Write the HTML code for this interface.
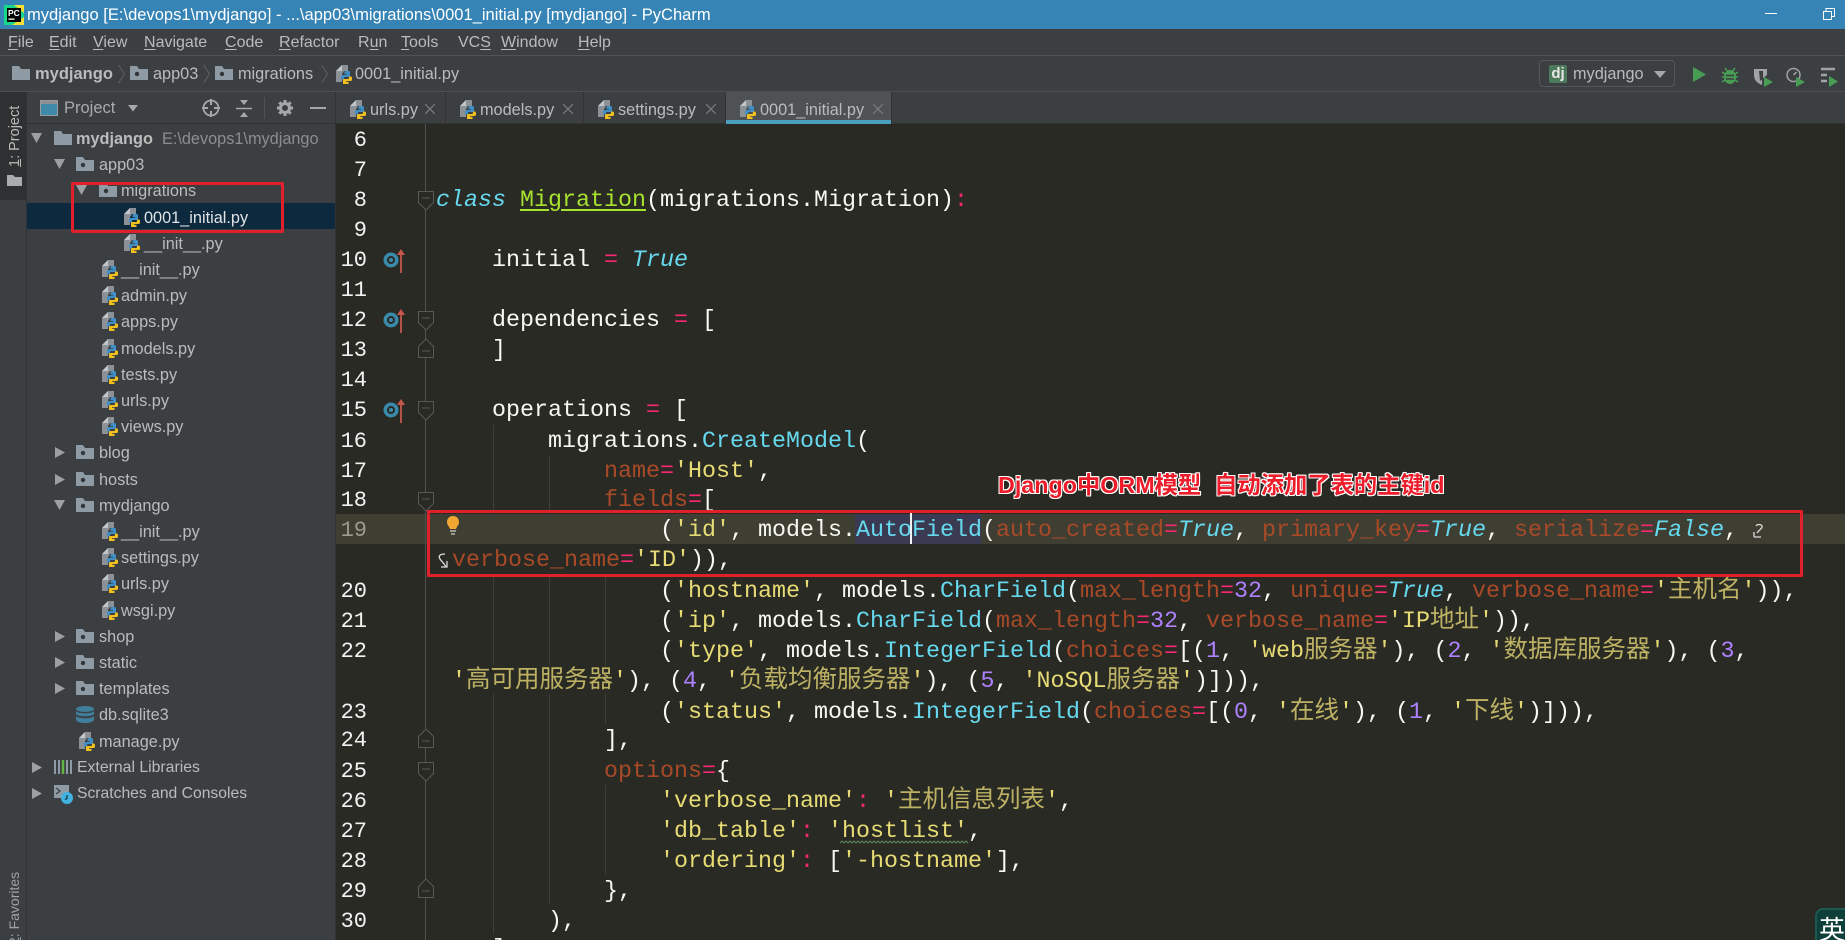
<!DOCTYPE html>
<html><head><meta charset="utf-8"><title>PyCharm</title>
<style>
html,body{margin:0;padding:0;background:#3c3f41;width:1845px;height:940px;overflow:hidden;}
#r{position:relative;width:1845px;height:940px;overflow:hidden;font-family:"Liberation Sans","Noto Sans CJK SC",sans-serif;color:#bbb;font-size:16px;}
.a{position:absolute;}
.t{position:absolute;white-space:pre;height:26px;line-height:26px;font-size:16.3px;color:#bbb;margin-top:1px;}
svg.i{position:absolute;overflow:visible;}
.m{position:absolute;top:30px;height:26px;line-height:26px;font-size:16px;color:#bbb;white-space:pre;}
.m u{text-underline-offset:2px;}
.l{position:absolute;left:436px;height:30px;white-space:pre;font:23.33px/30px "Liberation Mono","Noto Sans CJK SC",monospace;color:#f8f8f2;}
.c{font-size:24.5px;line-height:0;font-family:"Noto Sans CJK SC",sans-serif;}
.b{color:#66d9ef}.p{color:#f92672}.o{color:#a84a28}.s{color:#e6db74}.n{color:#ae81ff}.g{color:#a6e22e}.it{font-style:italic}
.s .c{color:#bdb264}
.ln{position:absolute;left:336px;width:31px;text-align:right;height:30px;font:22px/30px "Liberation Mono",monospace;color:#f2f2f2;}
.guide{position:absolute;width:1px;background:#3f3f3a;}
</style></head><body><div id="r">
<svg width="0" height="0" style="position:absolute">
<defs>
<symbol id="py" viewBox="0 0 18 20"><path d="M7 1h6v6H9l-2 3v8H1V7z" fill="#8b9196"/><path d="M7 1v6H1z" fill="#c2c6c9"/><path d="M11 7h2.500A1.500 1.500 0 0 1 15 8.500V12a1 1 0 0 1-1 1H10a1 1 0 0 0-1 1v1.500H7.500A1.500 1.500 0 0 1 6 14v-1.500A1.500 1.500 0 0 1 7.500 11H12v-.8H9.500V8.500A1.500 1.500 0 0 1 11 7z" fill="#3f8fc6"/><path d="M11 7h2.500A1.500 1.500 0 0 1 15 8.500V12a1 1 0 0 1-1 1H10a1 1 0 0 0-1 1v1.500H7.500A1.500 1.500 0 0 1 6 14v-1.500A1.500 1.500 0 0 1 7.500 11H12v-.8H9.500V8.500A1.500 1.500 0 0 1 11 7z" fill="#f2c01e" transform="rotate(180 11.500 14)"/></symbol>
<symbol id="fo" viewBox="0 0 18 14"><path d="M0 0h7l2 3h9v11H0z" fill="#8f9ba4"/></symbol>
<symbol id="pk" viewBox="0 0 18 14"><path d="M0 0h7l2 3h9v11H0z" fill="#8f9ba4"/><circle cx="7" cy="8" r="2.200" fill="#33363a"/></symbol>
<symbol id="ov" viewBox="0 0 23 26"><circle cx="8" cy="13" r="7.500" fill="#3a8bab"/><circle cx="8" cy="13" r="3" fill="none" stroke="#2a2a24" stroke-width="2"/><path d="M18 26V6" stroke="#b5534b" stroke-width="2"/><path d="M14 8l4-6 4 6z" fill="#c7564d"/></symbol>
<symbol id="fd" viewBox="0 0 16 20"><path d="M.5.5h15v11L8 19 .5 11.500z" fill="#2a2a24" stroke="#585854"/><path d="M4 7h8" stroke="#585854"/></symbol>
<symbol id="fu" viewBox="0 0 16 20"><path d="M.5 19.500h15v-11L8 1 .5 8.500z" fill="#2a2a24" stroke="#585854"/><path d="M4 13h8" stroke="#585854"/></symbol>
<symbol id="x" viewBox="0 0 10 10"><path d="M0 0l10 10M10 0L0 10" stroke="#787a7c" stroke-width="1.300"/></symbol>
<symbol id="chev" viewBox="0 0 7 20"><path d="M.5 1l6 9-6 9" fill="none" stroke="#5d6062" stroke-width="1"/></symbol>
</defs></svg>

<!-- title bar -->
<div class="a" style="left:0;top:0;width:1845px;height:29px;background:#3684b5"></div>
<svg class="i" style="left:4px;top:5px" width="20" height="20"><rect width="20" height="20" fill="#18d68a"/><path d="M0 0h20v8L10 0zM20 20H8l12-8z" fill="#f4e034"/><rect x="3" y="3" width="14" height="14" fill="#000"/><text x="4" y="11" font-family="Liberation Sans" font-size="8.500" font-weight="bold" fill="#fff">PC</text><rect x="4.500" y="13.500" width="6" height="1.300" fill="#fff"/></svg>
<div class="a" style="left:27px;top:0;height:29px;line-height:29px;color:#fff;font-size:16.55px;white-space:pre">mydjango [E:\devops1\mydjango] - ...\app03\migrations\0001_initial.py [mydjango] - PyCharm</div>
<div class="a" style="left:1765px;top:13px;width:12px;height:1px;background:#fff"></div>
<svg class="i" style="left:1823px;top:8px" width="12" height="12"><path d="M.5 3.500h8v8h-8zM3 3.500V.5h8.500v8H8.500" fill="none" stroke="#fff"/></svg>

<!-- menu -->
<div class="m" style="left:8px"><u>F</u>ile</div>
<div class="m" style="left:49px"><u>E</u>dit</div>
<div class="m" style="left:93px"><u>V</u>iew</div>
<div class="m" style="left:144px"><u>N</u>avigate</div>
<div class="m" style="left:225px"><u>C</u>ode</div>
<div class="m" style="left:279px"><u>R</u>efactor</div>
<div class="m" style="left:358px">R<u>u</u>n</div>
<div class="m" style="left:401px"><u>T</u>ools</div>
<div class="m" style="left:458px">VC<u>S</u></div>
<div class="m" style="left:501px"><u>W</u>indow</div>
<div class="m" style="left:578px"><u>H</u>elp</div>
<div class="a" style="left:0;top:55px;width:1845px;height:1px;background:#515355"></div>
<div class="a" style="left:0;top:91px;width:1845px;height:1px;background:#4e5052"></div>

<!-- breadcrumb -->
<svg class="i" style="left:12px;top:66px" width="18" height="14"><use href="#fo"/></svg>
<div class="t" style="left:35px;top:60px;font-weight:bold;font-size:16.500px">mydjango</div>
<svg class="i" style="left:118px;top:64px" width="7" height="20"><use href="#chev"/></svg>
<svg class="i" style="left:130px;top:66px" width="18" height="14"><use href="#pk"/></svg>
<div class="t" style="left:153px;top:60px">app03</div>
<svg class="i" style="left:203px;top:64px" width="7" height="20"><use href="#chev"/></svg>
<svg class="i" style="left:215px;top:66px" width="18" height="14"><use href="#pk"/></svg>
<div class="t" style="left:238px;top:60px">migrations</div>
<svg class="i" style="left:321px;top:64px" width="7" height="20"><use href="#chev"/></svg>
<svg class="i" style="left:335px;top:64px" width="18" height="20"><use href="#py"/></svg>
<div class="t" style="left:355px;top:60px">0001_initial.py</div>

<!-- run config -->
<div class="a" style="left:1539px;top:60px;width:134px;height:25px;border:1px solid #55585a;border-radius:4px"></div>
<div class="a" style="left:1549px;top:65px;width:18px;height:18px;background:#4d7a5c;border-radius:2px;color:#e8e8e8;font:bold 15px/17px 'Liberation Sans',sans-serif;text-align:center">dj</div>
<div class="t" style="left:1573px;top:60px">mydjango</div>
<svg class="i" style="left:1654px;top:71px" width="12" height="8"><path d="M0 0h12L6 7z" fill="#a5a8aa"/></svg>
<svg class="i" style="left:1693px;top:67px" width="13" height="15"><path d="M0 0l13 7.500L0 15z" fill="#499c54"/></svg>
<svg class="i" style="left:1722px;top:67px" width="16" height="17"><ellipse cx="8" cy="10" rx="6" ry="7" fill="#499c54"/><path d="M3 1l3 4M13 1l-3 4M0 10h16M0 5l3 2M16 5l-3 2M0 15l3-2M16 15l-3-2" stroke="#499c54" stroke-width="1.500"/><path d="M4 8.500h8M4 12h8" stroke="#3c3f41" stroke-width="1.500"/></svg>
<svg class="i" style="left:1754px;top:68px" width="19" height="19"><path d="M0 1h13v6l-5 4v6C3 15 0 12 0 7z" fill="#9fa3a6"/><path d="M5 3h4v8l-3 2z" fill="#3c3f41"/><path d="M10 9l9 5-9 5z" fill="#499c54"/></svg>
<svg class="i" style="left:1786px;top:67px" width="19" height="20"><circle cx="7.500" cy="8" r="6.500" fill="none" stroke="#9fa3a6" stroke-width="1.500"/><path d="M7.500 8l3-3" stroke="#9fa3a6" stroke-width="1.500"/><path d="M10 10l9 5-9 5z" fill="#499c54"/></svg>
<svg class="i" style="left:1820px;top:68px" width="18" height="19"><path d="M1 1h14M1 7h6M1 13h6" stroke="#9fa3a6" stroke-width="2.500"/><path d="M9 8l9 5.500-9 5.500z" fill="#499c54"/></svg>

<!-- left strip -->
<div class="a" style="left:0;top:92px;width:27px;height:848px;background:#3c3f41;border-right:1px solid #323232;box-sizing:border-box"></div>
<div class="a" style="left:0;top:92px;width:26px;height:108px;background:#2f3031"></div>
<div class="a" style="left:-15px;top:127px;width:60px;height:20px;line-height:20px;font-size:14.500px;color:#bbb;transform:rotate(-90deg);transform-origin:center;text-align:center;white-space:pre"><u>1</u>: Project</div>
<svg class="i" style="left:7px;top:175px" width="15" height="11"><path d="M0 0h6l2 2h7v9H0z" fill="#a9adb0"/></svg>
<div class="a" style="left:-26px;top:895px;width:80px;height:20px;line-height:20px;font-size:14px;color:#a0a3a5;transform:rotate(-90deg);white-space:pre;text-align:left"><u>2</u>: Favorites</div>

<!-- project panel -->
<div class="a" style="left:27px;top:123px;width:309px;height:1px;background:#323232"></div>
<div class="a" style="left:335px;top:92px;width:1px;height:848px;background:#323232"></div>
<svg class="i" style="left:40px;top:100px" width="18" height="16"><rect x=".5" y=".5" width="17" height="15" fill="#3f8aa8" stroke="#9a9da0"/><rect x="1" y="1" width="16" height="3" fill="#8d9092"/></svg>
<div class="t" style="left:64px;top:94px;font-size:16.500px;color:#aaa">Project</div>
<svg class="i" style="left:128px;top:105px" width="10" height="7"><path d="M0 0h10L5 6.500z" fill="#a5a8aa"/></svg>
<svg class="i" style="left:202px;top:99px" width="18" height="18"><circle cx="9" cy="9" r="7.500" fill="none" stroke="#a5a8aa" stroke-width="1.800"/><path d="M9 0v6M9 12v6M0 9h6M12 9h6" stroke="#a5a8aa" stroke-width="2"/></svg>
<svg class="i" style="left:236px;top:100px" width="16" height="17"><path d="M0 8.500h16" stroke="#a5a8aa" stroke-width="1.500"/><path d="M4 0h8L8 5zM4 17h8l-4-5z" fill="#a5a8aa"/></svg>
<div class="a" style="left:264px;top:97px;width:1px;height:22px;background:#505355"></div>
<svg class="i" style="left:277px;top:100px" width="16" height="16"><circle cx="8" cy="8" r="4.500" fill="none" stroke="#a5a8aa" stroke-width="3"/><path d="M8 0v3M8 13v3M0 8h3M13 8h3M2.300 2.300l2 2M11.700 11.700l2 2M2.300 13.700l2-2M11.700 4.300l2-2" stroke="#a5a8aa" stroke-width="3"/></svg>
<div class="a" style="left:310px;top:107px;width:16px;height:2px;background:#a5a8aa"></div>

<div class="a" style="left:27px;top:203px;width:308px;height:26px;background:#0d293e"></div>

<!-- tree arrows -->
<svg class="i" style="left:31px;top:133px" width="12" height="10"><path d="M0 0h11L5.500 10z" fill="#9da0a2"/></svg>
<svg class="i" style="left:54px;top:159px" width="12" height="10"><path d="M0 0h11L5.500 10z" fill="#9da0a2"/></svg>
<svg class="i" style="left:76px;top:185px" width="12" height="10"><path d="M0 0h11L5.500 10z" fill="#9da0a2"/></svg>
<svg class="i" style="left:55px;top:447px" width="11" height="11"><path d="M0 0l10 5.500L0 11z" fill="#9da0a2"/></svg>
<svg class="i" style="left:55px;top:474px" width="11" height="11"><path d="M0 0l10 5.500L0 11z" fill="#9da0a2"/></svg>
<svg class="i" style="left:54px;top:500px" width="12" height="10"><path d="M0 0h11L5.500 10z" fill="#9da0a2"/></svg>
<svg class="i" style="left:55px;top:631px" width="11" height="11"><path d="M0 0l10 5.500L0 11z" fill="#9da0a2"/></svg>
<svg class="i" style="left:55px;top:657px" width="11" height="11"><path d="M0 0l10 5.500L0 11z" fill="#9da0a2"/></svg>
<svg class="i" style="left:55px;top:683px" width="11" height="11"><path d="M0 0l10 5.500L0 11z" fill="#9da0a2"/></svg>
<svg class="i" style="left:32px;top:762px" width="11" height="11"><path d="M0 0l10 5.500L0 11z" fill="#9da0a2"/></svg>
<svg class="i" style="left:32px;top:788px" width="11" height="11"><path d="M0 0l10 5.500L0 11z" fill="#9da0a2"/></svg>

<!-- tree rows -->
<svg class="i" style="left:54px;top:131px" width="18" height="14"><use href="#fo"/></svg>
<div class="t" style="left:76px;top:125px"><b>mydjango</b><span style="color:#8b8e90">  E:\devops1\mydjango</span></div>
<svg class="i" style="left:76px;top:157px" width="18" height="14"><use href="#pk"/></svg><div class="t" style="left:99px;top:151px">app03</div>
<svg class="i" style="left:99px;top:183px" width="18" height="14"><use href="#pk"/></svg><div class="t" style="left:121px;top:177px">migrations</div>
<svg class="i" style="left:123px;top:207px" width="18" height="20"><use href="#py"/></svg><div class="t" style="left:144px;top:204px;color:#dfe3e6">0001_initial.py</div>
<svg class="i" style="left:123px;top:233px" width="18" height="20"><use href="#py"/></svg><div class="t" style="left:144px;top:230px">__init__.py</div>
<svg class="i" style="left:101px;top:259px" width="18" height="20"><use href="#py"/></svg><div class="t" style="left:121px;top:256px">__init__.py</div>
<svg class="i" style="left:101px;top:285px" width="18" height="20"><use href="#py"/></svg><div class="t" style="left:121px;top:282px">admin.py</div>
<svg class="i" style="left:101px;top:311px" width="18" height="20"><use href="#py"/></svg><div class="t" style="left:121px;top:308px">apps.py</div>
<svg class="i" style="left:101px;top:338px" width="18" height="20"><use href="#py"/></svg><div class="t" style="left:121px;top:335px">models.py</div>
<svg class="i" style="left:101px;top:364px" width="18" height="20"><use href="#py"/></svg><div class="t" style="left:121px;top:361px">tests.py</div>
<svg class="i" style="left:101px;top:390px" width="18" height="20"><use href="#py"/></svg><div class="t" style="left:121px;top:387px">urls.py</div>
<svg class="i" style="left:101px;top:416px" width="18" height="20"><use href="#py"/></svg><div class="t" style="left:121px;top:413px">views.py</div>
<svg class="i" style="left:76px;top:445px" width="18" height="14"><use href="#pk"/></svg><div class="t" style="left:99px;top:439px">blog</div>
<svg class="i" style="left:76px;top:472px" width="18" height="14"><use href="#pk"/></svg><div class="t" style="left:99px;top:466px">hosts</div>
<svg class="i" style="left:76px;top:498px" width="18" height="14"><use href="#pk"/></svg><div class="t" style="left:99px;top:492px">mydjango</div>
<svg class="i" style="left:101px;top:521px" width="18" height="20"><use href="#py"/></svg><div class="t" style="left:121px;top:518px">__init__.py</div>
<svg class="i" style="left:101px;top:547px" width="18" height="20"><use href="#py"/></svg><div class="t" style="left:121px;top:544px">settings.py</div>
<svg class="i" style="left:101px;top:573px" width="18" height="20"><use href="#py"/></svg><div class="t" style="left:121px;top:570px">urls.py</div>
<svg class="i" style="left:101px;top:600px" width="18" height="20"><use href="#py"/></svg><div class="t" style="left:121px;top:597px">wsgi.py</div>
<svg class="i" style="left:76px;top:629px" width="18" height="14"><use href="#pk"/></svg><div class="t" style="left:99px;top:623px">shop</div>
<svg class="i" style="left:76px;top:655px" width="18" height="14"><use href="#pk"/></svg><div class="t" style="left:99px;top:649px">static</div>
<svg class="i" style="left:76px;top:681px" width="18" height="14"><use href="#pk"/></svg><div class="t" style="left:99px;top:675px">templates</div>
<svg class="i" style="left:76px;top:706px" width="18" height="18"><ellipse cx="9" cy="3" rx="9" ry="3" fill="#3f7f9c"/><path d="M0 5c2 3 16 3 18 0v3c-2 3-16 3-18 0zM0 10c2 3 16 3 18 0v4c-2 4-16 4-18 0z" fill="#3f7f9c"/></svg><div class="t" style="left:99px;top:701px">db.sqlite3</div>
<svg class="i" style="left:78px;top:731px" width="18" height="20"><use href="#py"/></svg><div class="t" style="left:99px;top:728px">manage.py</div>
<svg class="i" style="left:54px;top:759px" width="18" height="16"><path d="M1 1v14M5 1v14M13 1v14M17 1v14" stroke="#8f9ba4" stroke-width="2"/><path d="M9 1v14" stroke="#62b543" stroke-width="2.500"/></svg><div class="t" style="left:77px;top:754px;font-size:15.800px">External Libraries</div>
<svg class="i" style="left:54px;top:785px" width="20" height="19"><rect width="15" height="13" fill="#8f9ba4"/><path d="M2 3l4 3-4 3" fill="none" stroke="#3c3f41" stroke-width="1.300"/><circle cx="13" cy="13" r="6" fill="#3fb2e0"/><path d="M13 10v3.500l-2 1" fill="none" stroke="#1a3a4a" stroke-width="1.300"/></svg><div class="t" style="left:77px;top:780px;font-size:15.700px">Scratches and Consoles</div>

<!-- tabs -->
<div class="a" style="left:726px;top:92px;width:165px;height:28px;background:#4e5254"></div>
<div class="a" style="left:726px;top:120px;width:165px;height:4px;background:#4a9fbd"></div>
<div class="a" style="left:445px;top:92px;width:1px;height:31px;background:#323232"></div>
<div class="a" style="left:583px;top:92px;width:1px;height:31px;background:#323232"></div>
<div class="a" style="left:725px;top:92px;width:1px;height:31px;background:#323232"></div>
<div class="a" style="left:891px;top:92px;width:1px;height:31px;background:#323232"></div>
<svg class="i" style="left:349px;top:99px" width="18" height="20"><use href="#py"/></svg><div class="t" style="left:370px;top:96px">urls.py</div><svg class="i" style="left:425px;top:104px" width="10" height="10"><use href="#x"/></svg>
<svg class="i" style="left:459px;top:99px" width="18" height="20"><use href="#py"/></svg><div class="t" style="left:480px;top:96px">models.py</div><svg class="i" style="left:563px;top:104px" width="10" height="10"><use href="#x"/></svg>
<svg class="i" style="left:597px;top:99px" width="18" height="20"><use href="#py"/></svg><div class="t" style="left:618px;top:96px">settings.py</div><svg class="i" style="left:706px;top:104px" width="10" height="10"><use href="#x"/></svg>
<svg class="i" style="left:739px;top:99px" width="18" height="20"><use href="#py"/></svg><div class="t" style="left:760px;top:96px">0001_initial.py</div><svg class="i" style="left:873px;top:104px" width="10" height="10"><use href="#x"/></svg>

<!-- editor -->
<div class="a" style="left:336px;top:124px;width:1509px;height:816px;background:#2a2a24"></div>
<div class="a" style="left:336px;top:123px;width:390px;height:1px;background:#323232"></div>
<div class="a" style="left:891px;top:123px;width:954px;height:1px;background:#323232"></div>
<div class="a" style="left:336px;top:514px;width:1509px;height:30px;background:#3f3e33"></div>
<div class="a" style="left:855px;top:514px;width:126px;height:30px;background:#3a3b52"></div>
<div class="a" style="left:425px;top:124px;width:1px;height:816px;background:#50504c"></div>

<div class="guide" style="left:493px;top:425px;height:120px"></div><div class="guide" style="left:493px;top:575px;height:90px"></div><div class="guide" style="left:493px;top:694px;height:240px"></div>
<div class="guide" style="left:549px;top:455px;height:90px"></div><div class="guide" style="left:549px;top:575px;height:90px"></div><div class="guide" style="left:549px;top:694px;height:210px"></div>
<div class="guide" style="left:605px;top:514px;height:31px"></div><div class="guide" style="left:605px;top:575px;height:90px"></div><div class="guide" style="left:605px;top:694px;height:30px"></div><div class="guide" style="left:605px;top:785px;height:89px"></div>

<!-- line numbers -->
<div class="ln" style="top:126px">6</div><div class="ln" style="top:156px">7</div><div class="ln" style="top:186px">8</div><div class="ln" style="top:216px">9</div>
<div class="ln" style="top:246px">10</div><div class="ln" style="top:276px">11</div><div class="ln" style="top:306px">12</div><div class="ln" style="top:336px">13</div>
<div class="ln" style="top:366px">14</div><div class="ln" style="top:396px">15</div><div class="ln" style="top:427px">16</div><div class="ln" style="top:457px">17</div>
<div class="ln" style="top:486px">18</div><div class="ln" style="top:516px;color:#9a9a90">19</div><div class="ln" style="top:577px">20</div><div class="ln" style="top:607px">21</div>
<div class="ln" style="top:637px">22</div><div class="ln" style="top:698px">23</div><div class="ln" style="top:726px">24</div><div class="ln" style="top:757px">25</div>
<div class="ln" style="top:787px">26</div><div class="ln" style="top:817px">27</div><div class="ln" style="top:847px">28</div><div class="ln" style="top:877px">29</div><div class="ln" style="top:907px">30</div>

<!-- gutter icons -->
<svg class="i" style="left:383px;top:247px" width="23" height="26"><use href="#ov"/></svg>
<svg class="i" style="left:383px;top:307px" width="23" height="26"><use href="#ov"/></svg>
<svg class="i" style="left:383px;top:397px" width="23" height="26"><use href="#ov"/></svg>
<svg class="i" style="left:418px;top:191px" width="16" height="20"><use href="#fd"/></svg>
<svg class="i" style="left:418px;top:311px" width="16" height="20"><use href="#fd"/></svg>
<svg class="i" style="left:418px;top:338px" width="16" height="20"><use href="#fu"/></svg>
<svg class="i" style="left:418px;top:401px" width="16" height="20"><use href="#fd"/></svg>
<svg class="i" style="left:418px;top:492px" width="16" height="20"><use href="#fd"/></svg>
<svg class="i" style="left:418px;top:728px" width="16" height="20"><use href="#fu"/></svg>
<svg class="i" style="left:418px;top:762px" width="16" height="20"><use href="#fd"/></svg>
<svg class="i" style="left:418px;top:878px" width="16" height="20"><use href="#fu"/></svg>
<svg class="i" style="left:445px;top:516px" width="16" height="20"><path d="M8 0c4 0 6 3 6 6 0 3-2 4-3 7H5C4 10 2 9 2 6c0-3 2-6 6-6z" fill="#f0a732"/><path d="M5 15h6M6 18h4" stroke="#a8a8a0" stroke-width="1.700"/></svg>

<!-- code -->
<div class="l" style="top:186px"><span class="b it">class</span> <span class="g" style="text-decoration:underline;text-underline-offset:3px">Migration</span>(migrations.Migration)<span class="p">:</span></div>
<div class="l" style="top:246px">    initial <span class="p">=</span> <span class="b it">True</span></div>
<div class="l" style="top:306px">    dependencies <span class="p">=</span> [</div>
<div class="l" style="top:336px">    ]</div>
<div class="l" style="top:396px">    operations <span class="p">=</span> [</div>
<div class="l" style="top:427px">        migrations.<span class="b">CreateModel</span>(</div>
<div class="l" style="top:457px">            <span class="o">name</span><span class="p">=</span><span class="s">'Host'</span>,</div>
<div class="l" style="top:486px">            <span class="o">fields</span><span class="p">=</span>[</div>
<div class="l" style="top:516px">                (<span class="s">'id'</span>, models.<span class="b">AutoField</span>(<span class="o">auto_created</span><span class="p">=</span><span class="b it">True</span>, <span class="o">primary_key</span><span class="p">=</span><span class="b it">True</span>, <span class="o">serialize</span><span class="p">=</span><span class="b it">False</span>,</div>
<div class="a" style="left:910px;top:510px;width:2px;height:34px;background:#f2f2f2"></div>
<svg class="i" style="left:1753px;top:523px" width="11" height="15"><path d="M3 3c1-2 5-2 6 0s-3 4-5 7M1 14h7M1 14V9" fill="none" stroke="#ddd" stroke-width="1.300"/></svg>
<svg class="i" style="left:437px;top:553px" width="13" height="16"><path d="M8 1C3 1 1 3 3 6s4 4 6 8M10 8v6H4" fill="none" stroke="#ddd" stroke-width="1.300"/></svg>
<div class="l" style="left:452px;top:546px"><span class="o">verbose_name</span><span class="p">=</span><span class="s">'ID'</span>)),</div>
<div class="l" style="top:577px">                (<span class="s">'hostname'</span>, models.<span class="b">CharField</span>(<span class="o">max_length</span><span class="p">=</span><span class="n">32</span>, <span class="o">unique</span><span class="p">=</span><span class="b it">True</span>, <span class="o">verbose_name</span><span class="p">=</span><span class="s">'<span class="c">主机名</span>'</span>)),</div>
<div class="l" style="top:607px">                (<span class="s">'ip'</span>, models.<span class="b">CharField</span>(<span class="o">max_length</span><span class="p">=</span><span class="n">32</span>, <span class="o">verbose_name</span><span class="p">=</span><span class="s">'IP<span class="c">地址</span>'</span>)),</div>
<div class="l" style="top:637px">                (<span class="s">'type'</span>, models.<span class="b">IntegerField</span>(<span class="o">choices</span><span class="p">=</span>[(<span class="n">1</span>, <span class="s">'web<span class="c">服务器</span>'</span>), (<span class="n">2</span>, <span class="s">'<span class="c">数据库服务器</span>'</span>), (<span class="n">3</span>,</div>
<div class="l" style="left:452px;top:667px"><span class="s">'<span class="c">高可用服务器</span>'</span>), (<span class="n">4</span>, <span class="s">'<span class="c">负载均衡服务器</span>'</span>), (<span class="n">5</span>, <span class="s">'NoSQL<span class="c">服务器</span>'</span>)])),</div>
<div class="l" style="top:698px">                (<span class="s">'status'</span>, models.<span class="b">IntegerField</span>(<span class="o">choices</span><span class="p">=</span>[(<span class="n">0</span>, <span class="s">'<span class="c">在线</span>'</span>), (<span class="n">1</span>, <span class="s">'<span class="c">下线</span>'</span>)])),</div>
<div class="l" style="top:726px">            ],</div>
<div class="l" style="top:757px">            <span class="o">options</span><span class="p">=</span>{</div>
<div class="l" style="top:787px">                <span class="s">'verbose_name'</span><span class="p">:</span> <span class="s">'<span class="c">主机信息列表</span>'</span>,</div>
<div class="l" style="top:817px">                <span class="s">'db_table'</span><span class="p">:</span> <span class="s">'hostlist'</span>,</div>
<div class="l" style="top:847px">                <span class="s">'ordering'</span><span class="p">:</span> [<span class="s">'-hostname'</span>],</div>
<div class="l" style="top:877px">            },</div>
<div class="l" style="top:907px">        ),</div>
<div class="l" style="top:935px">    ],</div>
<svg class="i" style="left:840px;top:841px" width="112" height="4"><path d="M0 2l2-2 2 2 2-2 2 2 2-2 2 2 2-2 2 2 2-2 2 2 2-2 2 2 2-2 2 2 2-2 2 2 2-2 2 2 2-2 2 2 2-2 2 2 2-2 2 2 2-2 2 2 2-2 2 2 2-2 2 2 2-2 2 2 2-2 2 2 2-2 2 2 2-2 2 2 2-2 2 2 2-2 2 2 2-2 2 2 2-2 2 2 2-2 2 2 2-2 2 2 2-2 2 2 2-2 2 2 2-2 2 2 2-2 2 2 2-2 2 2 2-2 2 2 2-2 2 2" fill="none" stroke="#5a8a5a"/></svg>

<!-- annotations -->
<div class="a" style="left:427px;top:510px;width:1370px;height:61px;border:3px solid #e2202c;border-radius:1px"></div>
<div class="a" style="left:71px;top:182px;width:207px;height:45px;border:3px solid #e2202c;border-radius:2px"></div>
<div class="a" style="left:998px;top:470px;height:30px;line-height:30px;white-space:pre;font-weight:bold;font-size:23.300px;color:#ec1c2a;text-shadow:1px 0 #fff,-1px 0 #fff,0 1px #fff,0 -1px #fff,1px 1px #fff,-1px -1px #fff,1px -1px #fff,-1px 1px #fff">Django中ORM模型  自动添加了表的主键id</div>

<!-- IME badge -->
<div class="a" style="left:1815px;top:908px;width:40px;height:40px;background:#0f3f3a;border:2px solid #1c5a50;border-radius:8px;box-sizing:border-box"></div>
<div class="a" style="left:1819px;top:914px;color:#fff;font:26px/30px 'Noto Sans CJK SC',sans-serif">英</div>
</div></body></html>
